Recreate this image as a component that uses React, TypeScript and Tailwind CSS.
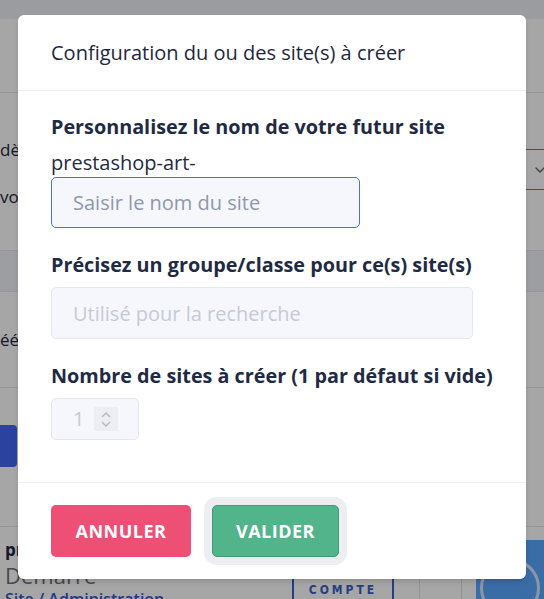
import { ChevronDown } from "lucide-react";

function Spinner() {
  return (
    <div className="flex h-[24px] w-[24px] flex-col items-center justify-center gap-[3px] bg-[#eceef2]">
      <svg width="10" height="6" viewBox="0 0 10 6" fill="none" stroke="#b3b8c3" strokeWidth="1.4">
        <polyline points="1,5 5,1 9,5" />
      </svg>
      <svg width="10" height="6" viewBox="0 0 10 6" fill="none" stroke="#b3b8c3" strokeWidth="1.4">
        <polyline points="1,1 5,5 9,1" />
      </svg>
    </div>
  );
}

function BackgroundPage() {
  return (
    <div className="text-[#1f2640]">
      <div className="h-[19px] bg-[#eef0f6]" />
      <div className="h-[74px] border-b border-[#e6e8ee]" />
      <div className="flex h-[157px] justify-between">
        <div className="pt-[44px] text-[17px] leading-[26px]">
          <p>dè</p>
          <p className="mt-[21px]">vo</p>
        </div>
        <div className="mt-[56px] -mr-[40px] flex h-[41px] w-[220px] items-center justify-end border-y border-[#5b74e8] pr-[36px]">
          <ChevronDown className="h-[16px] w-[16px] text-[#5c6478]" strokeWidth={2} />
        </div>
      </div>
      <div className="h-[42px] border-y border-[#e6e8ee] bg-[#f2f3f8]" />
      <div className="flex h-[96px] items-center border-b border-[#e6e8ee] text-[17px]">
        <p>éé</p>
      </div>
      <div className="h-[139px] border-b border-[#e6e8ee] pt-[37px]">
        <div className="h-[42px] w-[17px] rounded-r-[4px] bg-[#4268f5]" />
      </div>
      <div className="flex h-[72px]">
        <div className="w-[292px] pl-[5px] pt-[11px]">
          <p className="text-[17px] font-bold leading-[24px]">pr</p>
          <p className="text-[22px] leading-[26px] text-[#6b7080]">Démarré</p>
          <p className="text-[16px] font-semibold leading-[22px] text-[#3557d6]">Site / Administration</p>
        </div>
        <div className="flex w-[102px] flex-col">
          <div className="h-[51px]" />
          <div className="flex flex-1 justify-center border-x-2 border-[#3a62c9] pt-[4px] font-['DejaVu_Sans_Condensed',sans-serif] text-[12px] font-bold tracking-[3px] text-[#3a62c9]">
            COMPTE
          </div>
        </div>
        <div className="w-[26px] border-r border-[#e0e2e8]" />
        <div className="w-[42px] border-r border-[#e0e2e8]" />
        <div className="w-[14px]" />
        <div className="mt-[13px] flex w-[68px] items-start justify-center overflow-hidden rounded-tl-[6px] bg-[#5aa6ff] pt-[18px]">
          <div className="h-[60px] w-[60px] rounded-full border-[3px] border-[#d6e8ff]" />
        </div>
      </div>
    </div>
  );
}

export default function App() {
  return (
    <div className="relative h-[599px] w-[544px] overflow-hidden bg-white font-['Open_Sans',sans-serif]">
      <BackgroundPage />
      <div className="absolute inset-0 bg-black/35" />

      <div className="absolute inset-0 flex justify-center pt-[15px]">
        <div className="h-[564px] w-[508px] rounded-[6px] bg-white shadow-md">
          <div className="flex h-[76px] items-center border-b border-[#eef0f5] px-[33px]">
            <h2 className="text-[20px] leading-[28px] text-[#1f2740]">Configuration du ou des site(s) à créer</h2>
          </div>

          <div className="px-[33px] pt-[22px] pb-[42px] text-[#1f2a44]">
            <p className="whitespace-nowrap text-[19.8px] font-bold leading-[28px]">Personnalisez le nom de votre futur site</p>
            <p className="mt-[8px] text-[20px] leading-[28px]">prestashop-art-</p>
            <input
              readOnly
              placeholder="Saisir le nom du site"
              className="block h-[51px] w-[309px] rounded-[5px] border border-[#4a6ee0] bg-[#f6f7fc] pl-[21px] text-[20px] outline-none placeholder:text-[#8d97b0]"
            />

            <p className="mt-[23px] whitespace-nowrap text-[19.8px] font-bold leading-[28px]">Précisez un groupe/classe pour ce(s) site(s)</p>
            <input
              readOnly
              placeholder="Utilisé pour la recherche"
              className="mt-[8px] block h-[52px] w-[422px] rounded-[5px] border border-[#e4e7ef] bg-[#f6f7fc] pl-[21px] text-[20px] outline-none placeholder:text-[#c5cad7]"
            />

            <p className="mt-[23px] whitespace-nowrap text-[19.8px] font-bold leading-[28px]">Nombre de sites à créer (1 par défaut si vide)</p>
            <div className="mt-[8px] flex h-[42px] w-[88px] items-center rounded-[5px] border border-[#e4e7ef] bg-[#f6f7fc] pl-[21px]">
              <span className="w-[21px] text-[20px] leading-none text-[#c5cad7]">1</span>
              <Spinner />
            </div>
          </div>

          <div className="flex items-center border-t border-[#eef0f5] px-[33px] pt-[22px] pb-[22px]">
            <button className="h-[52px] w-[140px] rounded-[5px] bg-[#ee4f74] text-[18px] font-bold tracking-[0.5px] text-white">
              ANNULER
            </button>
            <button className="ml-[21px] h-[52px] w-[127px] rounded-[5px] border border-[#3f9b72] bg-[#52b48a] text-[18px] font-bold tracking-[0.5px] text-white ring-8 ring-[#eceef2]">
              VALIDER
            </button>
          </div>
        </div>
      </div>
    </div>
  );
}
